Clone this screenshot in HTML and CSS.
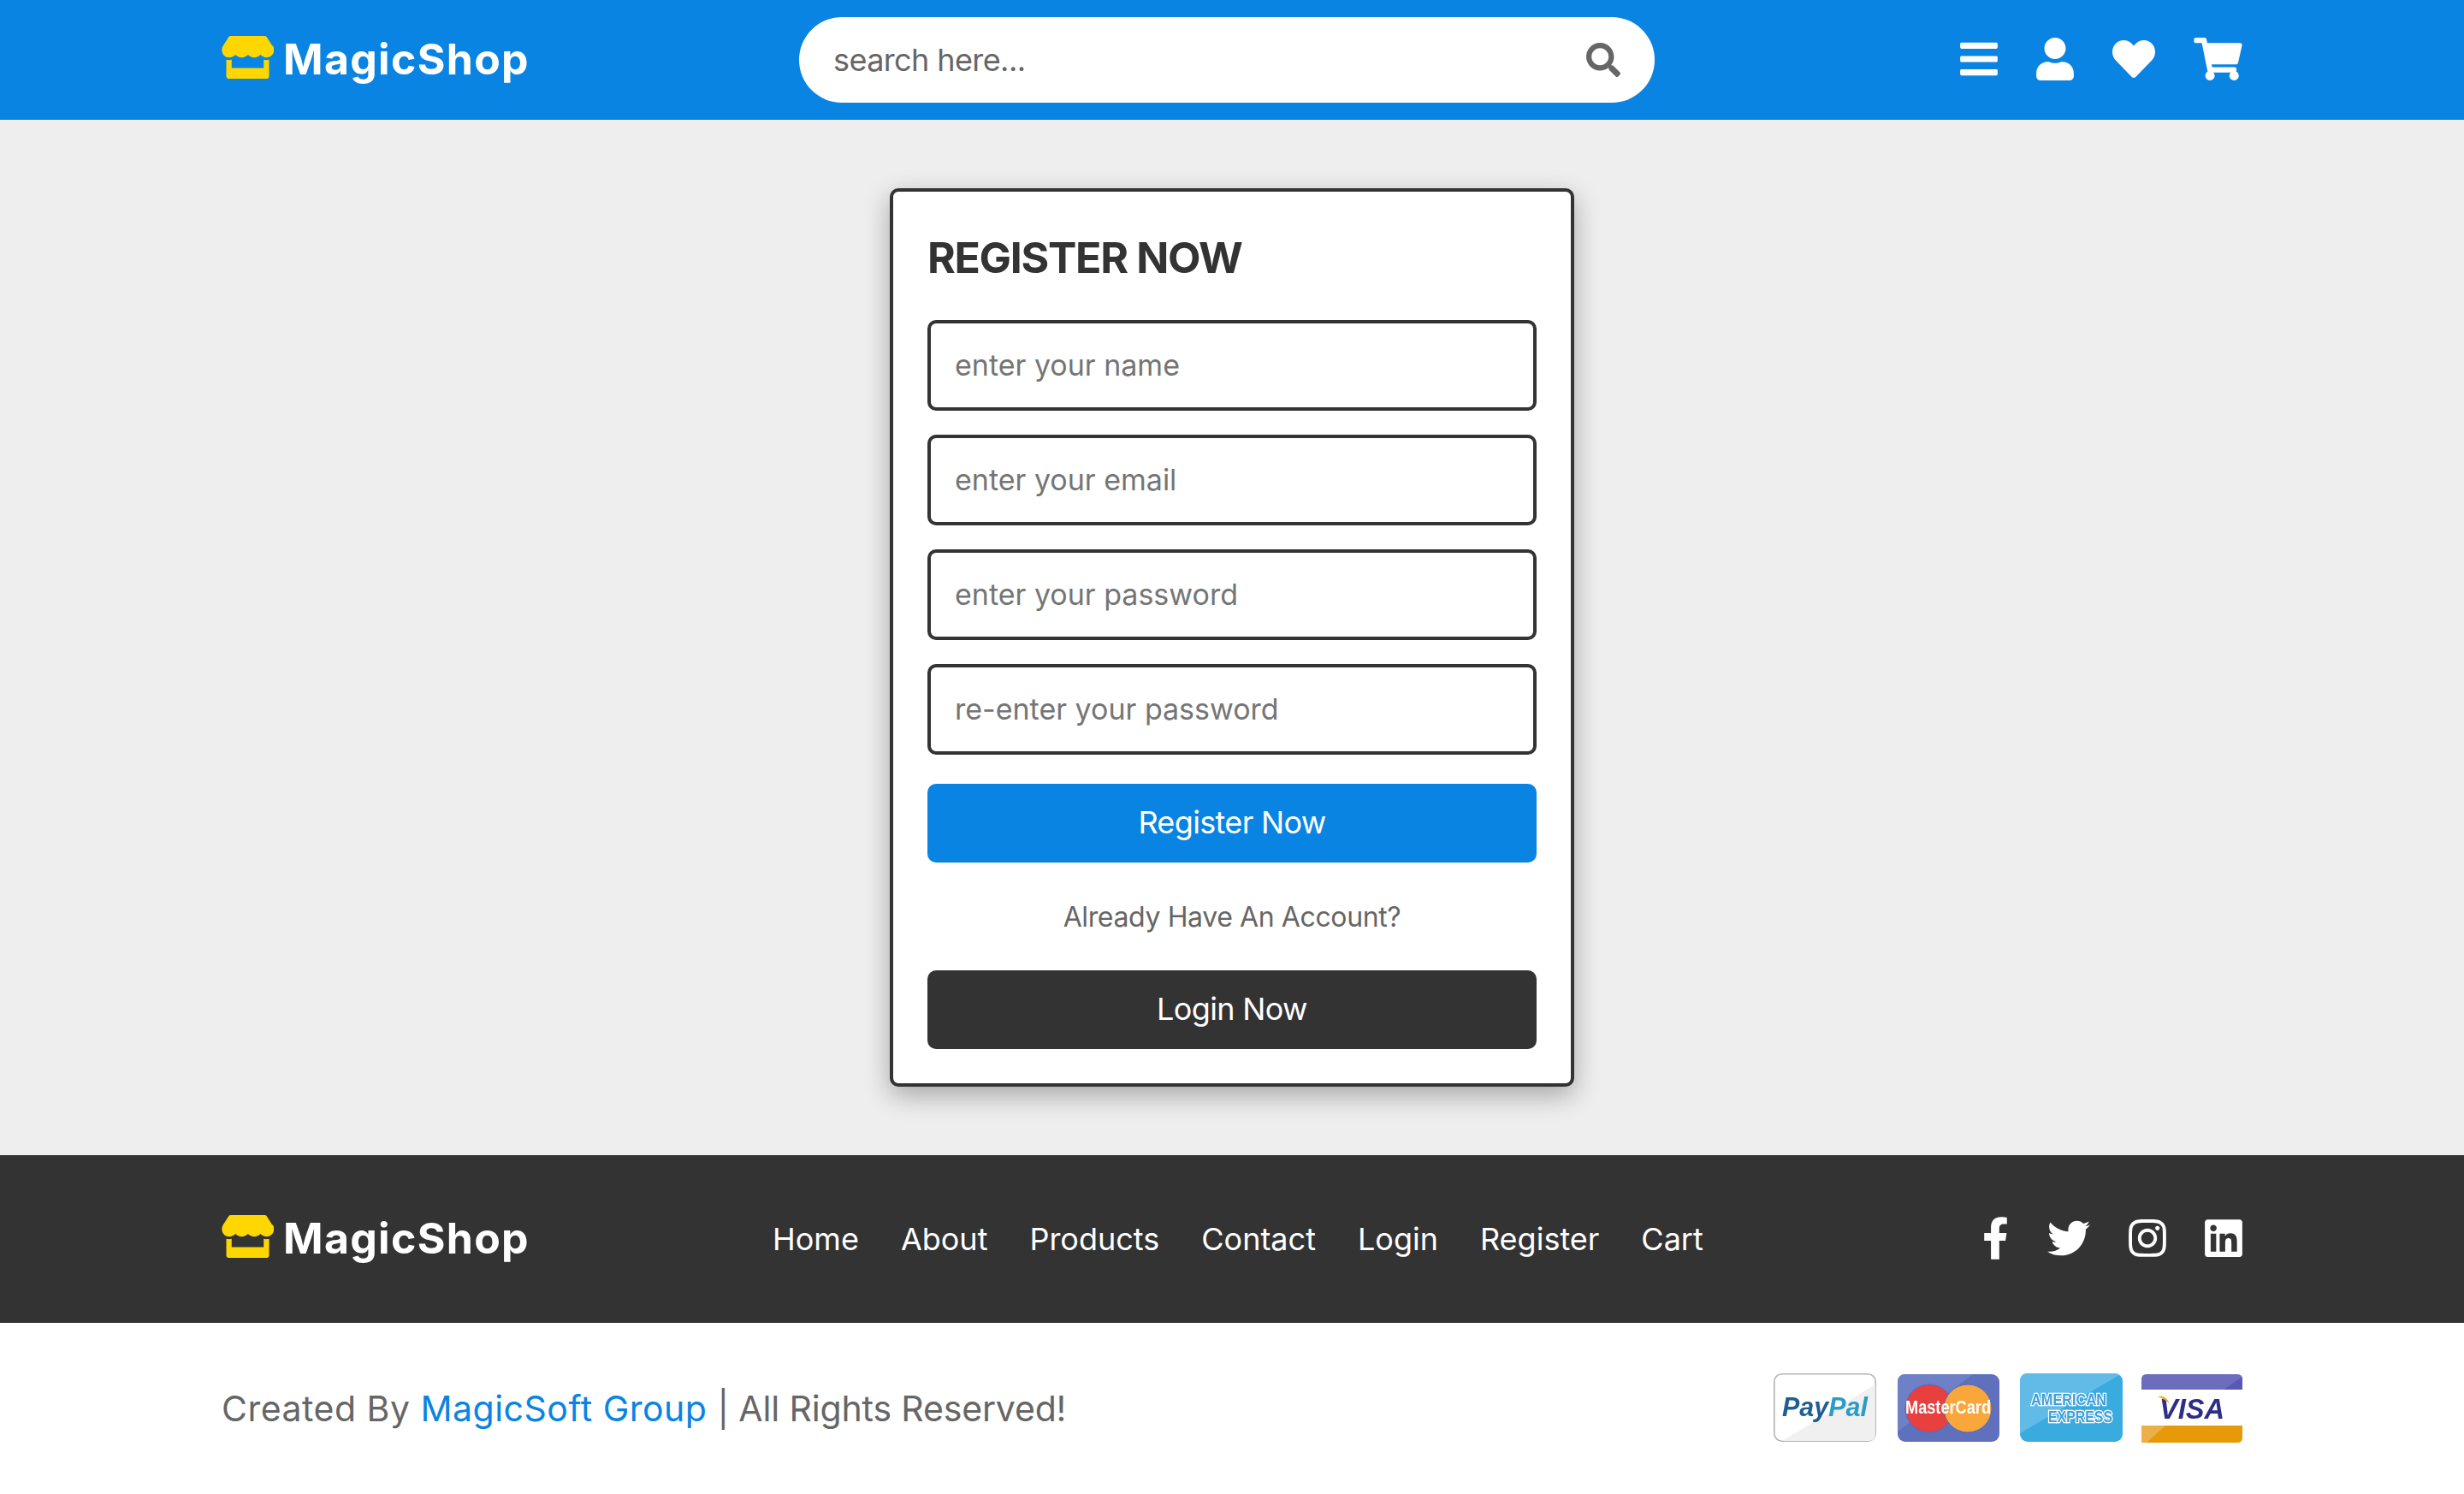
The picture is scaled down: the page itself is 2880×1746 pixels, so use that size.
FILE: index.html
```html
<!DOCTYPE html>
<html lang="en">
<head>
<meta charset="utf-8">
<title>Register</title>
<link rel="stylesheet" href="styles.css">
</head>
<body>
<svg class="defs" width="0" height="0" aria-hidden="true">
  <symbol id="i-store" viewBox="0 0 616 512"><path d="M602 118.6L537.1 15C531.3 5.7 521 0 510 0H106C95 0 84.7 5.7 78.9 15L14 118.6c-33.9 54.1-3.8 129.3 59.6 137.9 4.6.6 9.1.9 13.7.9 29.9 0 56.4-13.1 74.8-33.4 18.4 20.3 44.9 33.4 74.8 33.4 30 0 56.5-13.1 74.8-33.4 18.4 20.3 44.9 33.4 74.8 33.4 30 0 56.4-13.1 74.8-33.4 18.5 20.3 44.9 33.4 74.8 33.4 4.7 0 9.2-.3 13.7-.9 63.6-8.5 93.7-83.7 59.7-137.9zM529.5 288c-10 0-19.9-1.5-29.5-3.8V384H116v-99.8c-9.6 2.2-19.5 3.8-29.5 3.8-6 0-12.1-.4-18-1.2-5.6-.8-11.1-2.1-16.4-3.6V480c0 17.7 14.3 32 32 32h448c17.7 0 32-14.3 32-32V283.2c-5.4 1.6-10.8 2.9-16.4 3.6-6.1.8-12.1 1.2-18.2 1.2z"/></symbol>
  <symbol id="i-search" viewBox="0 0 512 512"><path d="M505 442.7L405.3 343c-4.5-4.5-10.6-7-17-7H372c27.6-35.3 44-79.7 44-128C416 93.1 322.9 0 208 0S0 93.1 0 208s93.1 208 208 208c48.3 0 92.7-16.4 128-44v16.3c0 6.4 2.5 12.5 7 17l99.7 99.7c9.4 9.4 24.6 9.4 33.9 0l28.3-28.3c9.4-9.4 9.4-24.6.1-34zM208 336c-70.7 0-128-57.2-128-128 0-70.7 57.2-128 128-128 70.7 0 128 57.2 128 128 0 70.7-57.2 128-128 128z"/></symbol>
  <symbol id="i-bars" viewBox="0 0 448 512"><path d="M16 132h416c8.837 0 16-7.163 16-16V76c0-8.837-7.163-16-16-16H16C7.163 60 0 67.163 0 76v40c0 8.837 7.163 16 16 16zm0 160h416c8.837 0 16-7.163 16-16v-40c0-8.837-7.163-16-16-16H16c-8.837 0-16 7.163-16 16v40c0 8.837 7.163 16 16 16zm0 160h416c8.837 0 16-7.163 16-16v-40c0-8.837-7.163-16-16-16H16c-8.837 0-16 7.163-16 16v40c0 8.837 7.163 16 16 16z"/></symbol>
  <symbol id="i-user" viewBox="0 0 448 512"><path d="M224 256c70.7 0 128-57.3 128-128S294.7 0 224 0 96 57.3 96 128s57.3 128 128 128zm89.6 32h-16.7c-22.2 10.2-46.9 16-72.9 16s-50.6-5.8-72.9-16h-16.7C60.2 288 0 348.2 0 422.4V464c0 26.5 21.5 48 48 48h352c26.5 0 48-21.5 48-48v-41.6c0-74.2-60.2-134.4-134.4-134.4z"/></symbol>
  <symbol id="i-heart" viewBox="0 0 512 512"><path d="M462.3 62.6C407.5 15.9 326 24.3 275.7 76.2L256 96.5l-19.7-20.3C186.1 24.3 104.5 15.9 49.7 62.6c-62.8 53.6-66.1 149.8-9.9 207.9l193.5 199.8c12.5 12.9 32.8 12.9 45.3 0l193.5-199.8c56.3-58.1 53-154.3-9.8-207.9z"/></symbol>
  <symbol id="i-cart" viewBox="0 0 576 512"><path d="M528.12 301.319l47.273-208C578.806 78.301 567.391 64 551.99 64H159.208l-9.166-44.81C147.758 8.021 137.93 0 126.529 0H24C10.745 0 0 10.745 0 24v16c0 13.255 10.745 24 24 24h69.883l70.248 343.435C147.325 417.1 136 435.222 136 456c0 30.928 25.072 56 56 56s56-25.072 56-56c0-15.674-6.447-29.835-16.824-40h209.647C430.447 426.165 424 440.326 424 456c0 30.928 25.072 56 56 56s56-25.072 56-56c0-22.172-12.888-41.332-31.579-50.405l5.517-24.276c3.413-15.018-8.002-29.319-23.403-29.319H218.117l-6.545-32h293.145c11.206 0 20.92-7.754 23.403-18.681z"/></symbol>
  <symbol id="i-fb" viewBox="0 0 320 512"><path d="M279.14 288l14.22-92.66h-88.91v-60.13c0-25.35 12.42-50.06 52.24-50.06h40.42V6.26S260.43 0 225.36 0c-73.22 0-121.08 44.38-121.08 124.72v70.62H22.89V288h81.39v224h100.17V288z"/></symbol>
  <symbol id="i-tw" viewBox="0 0 512 512"><path d="M459.37 151.716c.325 4.548.325 9.097.325 13.645 0 138.72-105.583 298.558-298.558 298.558-59.452 0-114.68-17.219-161.137-47.106 8.447.974 16.568 1.299 25.34 1.299 49.055 0 94.213-16.568 130.274-44.832-46.132-.975-84.792-31.188-98.112-72.772 6.498.974 12.995 1.624 19.818 1.624 9.421 0 18.843-1.3 27.614-3.573-48.081-9.747-84.143-51.98-84.143-102.985v-1.299c13.969 7.797 30.214 12.67 47.431 13.319-28.264-18.843-46.781-51.005-46.781-87.391 0-19.492 5.197-37.36 14.294-52.954 51.655 63.675 129.3 105.258 216.365 109.807-1.624-7.797-2.599-15.918-2.599-24.04 0-57.828 46.782-104.934 104.934-104.934 30.213 0 57.502 12.67 76.67 33.137 23.715-4.548 46.456-13.32 66.599-25.34-7.798 24.366-24.366 44.833-46.132 57.827 21.117-2.273 41.584-8.122 60.426-16.243-14.292 20.791-32.161 39.308-52.628 54.253z"/></symbol>
  <symbol id="i-ig" viewBox="0 0 448 512"><path d="M224.1 141c-63.6 0-114.9 51.3-114.9 114.9s51.3 114.9 114.9 114.9S339 319.5 339 255.9 287.7 141 224.1 141zm0 189.6c-41.1 0-74.7-33.5-74.7-74.7s33.5-74.7 74.7-74.7 74.7 33.5 74.7 74.7-33.6 74.7-74.7 74.7zm146.4-194.3c0 14.9-12 26.8-26.8 26.8-14.9 0-26.8-12-26.8-26.8s12-26.8 26.8-26.8 26.8 12 26.8 26.8zm76.1 27.2c-1.7-35.9-9.9-67.7-36.2-93.9-26.2-26.2-58-34.4-93.9-36.2-37-2.1-147.9-2.1-184.9 0-35.8 1.7-67.6 9.9-93.9 36.1s-34.4 58-36.2 93.9c-2.1 37-2.1 147.9 0 184.9 1.7 35.9 9.9 67.7 36.2 93.9s58 34.4 93.9 36.2c37 2.1 147.9 2.1 184.9 0 35.9-1.7 67.7-9.9 93.9-36.2 26.2-26.2 34.4-58 36.2-93.9 2.1-37 2.1-147.8 0-184.8zM398.8 388c-7.8 19.6-22.9 34.7-42.6 42.6-29.5 11.7-99.5 9-132.1 9s-102.7 2.6-132.1-9c-19.6-7.8-34.7-22.9-42.6-42.6-11.7-29.5-9-99.5-9-132.1s-2.6-102.7 9-132.1c7.8-19.6 22.9-34.7 42.6-42.6 29.5-11.7 99.5-9 132.1-9s102.7-2.6 132.1 9c19.6 7.8 34.7 22.9 42.6 42.6 11.7 29.5 9 99.5 9 132.1s2.7 102.7-9 132.1z"/></symbol>
  <symbol id="i-in" viewBox="0 0 448 512"><path d="M416 32H31.9C14.3 32 0 46.5 0 64.3v383.4C0 465.5 14.3 480 31.9 480H416c17.6 0 32-14.5 32-32.3V64.3c0-17.8-14.4-32.3-32-32.3zM135.4 416H69V202.2h66.5V416zm-33.2-243c-21.3 0-38.5-17.3-38.5-38.5S80.9 96 102.2 96c21.2 0 38.5 17.3 38.5 38.5 0 21.3-17.2 38.5-38.5 38.5zm282.1 243h-66.4V312c0-24.8-.5-56.7-34.5-56.7-34.6 0-39.9 27-39.9 54.9V416h-66.4V202.2h63.7v29.2h.9c8.9-16.8 30.6-34.5 62.9-34.5 67.2 0 79.7 44.3 79.7 101.9V416z"/></symbol>
</svg>

<header class="site-header">
  <a class="logo" href="#"><svg class="logo-icon"><use href="#i-store"/></svg><span>MagicShop</span></a>
  <form class="search">
    <input class="search-input" type="text" placeholder="search here...">
    <svg class="search-icon"><use href="#i-search"/></svg>
  </form>
  <nav class="icons">
    <svg class="ico w44"><use href="#i-bars"/></svg>
    <svg class="ico w44"><use href="#i-user"/></svg>
    <svg class="ico w50"><use href="#i-heart"/></svg>
    <svg class="ico w56"><use href="#i-cart"/></svg>
  </nav>
</header>

<main class="page">
  <form class="card">
    <h3 class="card-title">REGISTER NOW</h3>
    <input class="field" type="text" placeholder="enter your name">
    <input class="field" type="email" placeholder="enter your email">
    <input class="field" type="password" placeholder="enter your password">
    <input class="field" type="password" placeholder="re-enter your password">
    <button class="btn btn-blue" type="button">Register Now</button>
    <p class="hint">Already Have An Account?</p>
    <button class="btn btn-dark" type="button">Login Now</button>
  </form>
</main>

<footer class="site-footer">
  <a class="logo" href="#"><svg class="logo-icon"><use href="#i-store"/></svg><span>MagicShop</span></a>
  <nav class="links">
    <a href="#">Home</a><a href="#">About</a><a href="#">Products</a><a href="#">Contact</a><a href="#">Login</a><a href="#">Register</a><a href="#">Cart</a>
  </nav>
  <div class="icons">
    <svg class="ico w31"><use href="#i-fb"/></svg>
    <svg class="ico w50"><use href="#i-tw"/></svg>
    <svg class="ico w44"><use href="#i-ig"/></svg>
    <svg class="ico w44"><use href="#i-in"/></svg>
  </div>
</footer>

<section class="credit">
  <p class="credit-text">Created By <a href="#">MagicSoft Group</a> <span class="credit-rest">| All Rights Reserved!</span></p>
  <div class="cards">
    <svg class="pay" viewBox="0 0 120 82">
      <rect x=".8" y=".8" width="118.4" height="78.4" rx="9" fill="#fff" stroke="#b5b5b5" stroke-width="1.6"/>
      <path d="M10 79 L119 13 V71 q0 8 -8 8z" fill="#f0f0f0"/>
      <text class="pay-pp" x="10" y="50" textLength="100" lengthAdjust="spacingAndGlyphs"><tspan fill="#1d5f93">Pay</tspan><tspan fill="#2a9cc7">Pal</tspan></text>
    </svg>
    <svg class="pay" viewBox="0 0 120 82">
      <rect x="0" y="1" width="119" height="79" rx="9" fill="#5f71bd"/>
      <path d="M0 68 L88 1 H9 q-9 0 -9 9z" fill="#6e80c6"/>
      <circle cx="37" cy="41" r="28" fill="#e8403f" stroke="#4f6ad0"/>
      <circle cx="82" cy="41" r="28" fill="#f9a63a" stroke="#4f6ad0"/>
      <text class="pay-mc" x="9" y="47" textLength="100" lengthAdjust="spacingAndGlyphs">MasterCard</text>
    </svg>
    <svg class="pay" viewBox="0 0 120 82">
      <rect x="0" y="0" width="120" height="80" rx="9" fill="#3aabdf"/>
      <path d="M0 70 L116 2 Q114 0 110 0 H9 q-9 0 -9 9z" fill="#62bbe6"/>
      <text class="pay-ax" x="13" y="37" textLength="88" lengthAdjust="spacingAndGlyphs">AMERICAN</text>
      <text class="pay-ax" x="33" y="57" textLength="75" lengthAdjust="spacingAndGlyphs">EXPRESS</text>
    </svg>
    <svg class="pay pay-narrow" viewBox="0 0 118 82">
      <rect x="0" y="1" width="118" height="80" rx="6" fill="#fff"/>
      <path d="M0 19 V7 q0-6 6-6 H112 q6 0 6 6 V19z" fill="#6c6dbd"/>
      <path d="M96 19 L118 4 V19z" fill="#5858b5"/>
      <path d="M0 61 H118 V75 q0 6-6 6 H6 q-6 0-6-6z" fill="#e69a0a"/>
      <path d="M0 81 V61 H28 L6 81z" fill="#edb048"/>
      <text class="pay-vs" x="21" y="53" textLength="76" lengthAdjust="spacingAndGlyphs">VISA</text>
      <path d="M19 27 q10 -2 14 9 q-4 -5 -14 -9z" fill="#eba51a"/>
    </svg>
  </div>
</section>
</body>
</html>
```

FILE: styles.css
```css
* { box-sizing: border-box; margin: 0; padding: 0; }
html, body { background: #fff; }
body { font-family: Inter, "Liberation Sans", sans-serif; color: #333; }
a { text-decoration: none; }
.defs { position: absolute; }

.site-header {
  display: grid;
  grid-template-columns: 675px 1000px 1fr;
  align-items: center;
  height: 140px;
  padding: 0 259px;
  background: #0984e3;
}
.logo {
  display: flex;
  align-items: center;
  gap: 11px;
  color: #fff;
  font-size: 50px;
  font-weight: 700;
  letter-spacing: 1.3px;
  line-height: 75px;
}
.logo span { margin-top: -2px; }
.logo-icon { width: 61px; height: 50px; margin-top: -6px; fill: #ffd700; }

.search {
  display: flex;
  align-items: center;
  height: 100px;
  padding: 0 40px;
  border-radius: 50px;
  background: #fff;
}
.search-input {
  flex: 1;
  min-width: 0;
  border: 0;
  outline: 0;
  background: none;
  font: 400 36px Inter, sans-serif;
  letter-spacing: -.6px;
  color: #666;
}
.search-input::placeholder { color: #666; opacity: 1; }
.search-icon { width: 40px; height: 40px; fill: #666; }

.icons { display: flex; justify-content: flex-end; align-items: center; gap: 45px; margin-top: -2px; }
.ico { height: 50px; fill: #fff; }
.w31 { width: 31px; }
.w44 { width: 44px; }
.w50 { width: 50px; }
.w56 { width: 57px; }

.page {
  display: flex;
  justify-content: center;
  padding: 80px 0;
  background: #eee;
}
.card {
  display: flex;
  flex-direction: column;
  width: 800px;
  padding: 40px;
  border: 4px solid #333;
  border-radius: 10px;
  background: #fff;
  box-shadow: 0 10px 30px rgba(0, 0, 0, .3);
}
.card-title {
  margin: 4px 0 40px;
  font-size: 50px;
  font-weight: 700;
  letter-spacing: -1.3px;
  line-height: 66px;
  color: #333;
}
.field {
  height: 106px;
  margin-bottom: 28px;
  padding: 0 28px 2px;
  border: 4px solid #333;
  border-radius: 10px;
  outline: 0;
  background: #fff;
  font: 400 34px Inter, sans-serif;
  color: #333;
}
.field::placeholder { color: #757575; opacity: 1; }
.btn {
  height: 92px;
  padding-bottom: 2px;
  border: 0;
  border-radius: 10px;
  color: #fff;
  font: 400 36px Inter, sans-serif;
  letter-spacing: -.65px;
}
.btn-blue { margin-top: 6px; background: #0984e3; }
.btn-dark { background: #333; }
.hint {
  padding: 41px 0 39px;
  text-align: center;
  font-size: 32px;
  letter-spacing: -.38px;
  line-height: 46px;
  color: #666;
}

.site-footer {
  display: grid;
  grid-template-columns: 644px 1fr auto;
  align-items: center;
  height: 196px;
  padding: 0 259px;
  background: #333;
}
.links { display: flex; gap: 49px; }
.links a { color: #fff; font-size: 36px; }

.credit {
  display: flex;
  justify-content: space-between;
  align-items: center;
  height: 200px;
  padding: 0 259px;
  background: #fff;
}
.credit-text { font-size: 41px; letter-spacing: .5px; color: #666; white-space: nowrap; }
.credit-text a { color: #0984e3; }
.credit-rest { letter-spacing: -.15px; }
.cards { display: grid; grid-template-columns: 145px 143px 142px 118px; align-items: center; }
.pay { width: 120px; height: 82px; filter: blur(.5px); }
.pay-narrow { width: 118px; }
.pay-pp { font: italic 700 31px "Liberation Sans", sans-serif; }
.pay-mc { font: 700 22px "Liberation Sans", sans-serif; fill: #fff; }
.pay-ax { font: 700 18px "Liberation Sans", sans-serif; fill: #3f9fdb; stroke: #fff; stroke-width: 2.6px; paint-order: stroke; }
.pay-vs { font: italic 700 33px "Liberation Sans", sans-serif; fill: #2d2f87; }
```
